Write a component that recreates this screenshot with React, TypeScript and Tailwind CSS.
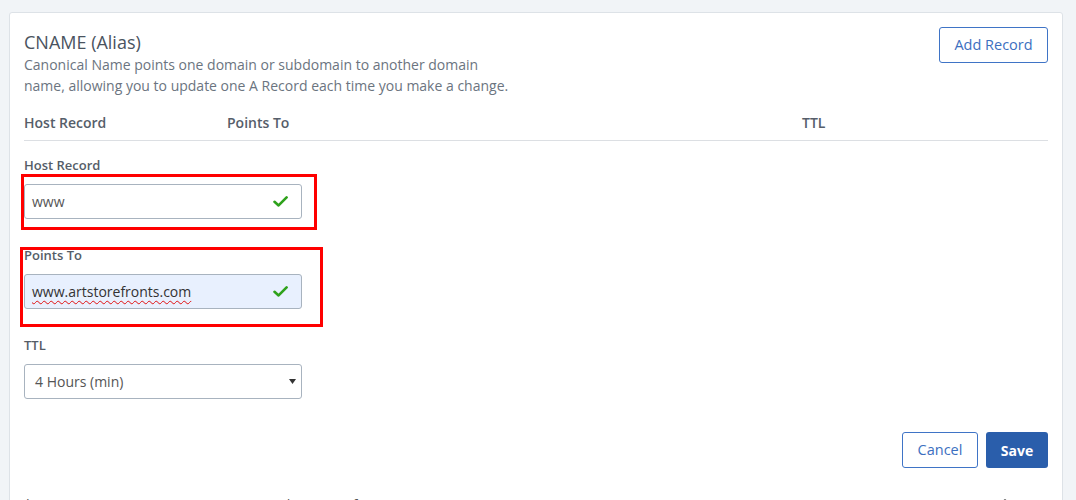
import { EllipsisVertical } from "lucide-react";

function CheckMark() {
  return (
    <svg width="15" height="11" viewBox="0 0 15 11" fill="none" aria-hidden="true">
      <path d="M1.5 5.8 5.6 9.4 13.6 1.4" stroke="#2ea21b" strokeWidth="2.6" strokeLinecap="round" strokeLinejoin="round" />
    </svg>
  );
}

function Caret() {
  return (
    <svg width="7" height="5" viewBox="0 0 7 5" aria-hidden="true">
      <path d="M0 0h7L3.5 5z" fill="#333" />
    </svg>
  );
}

const COLS = "grid grid-cols-[203px_575px_1fr]";

export default function App() {
  return (
    <div className="min-h-screen bg-[#f1f4f7] pl-[9px] pr-[13px] pt-[12px] font-['Open_Sans',sans-serif]">
      <div className="rounded-t-[3px] border border-[#dde2e7] bg-white px-[14px] pt-[14px] pb-6">
        {/* heading + add button */}
        <div className="flex items-start justify-between">
          <div className="mt-[3px]">
            <h2 className="text-[18px] leading-[24px] text-[#4a5360]">CNAME (Alias)</h2>
            <p className="w-[490px] text-[14px] leading-[21px] text-[#6b7480]">
              Canonical Name points one domain or subdomain to another domain name, allowing you to update one A
              Record each time you make a change.
            </p>
          </div>
          <button
            type="button"
            className="h-[36px] w-[109px] rounded-[3px] border border-[#3f74c6] bg-white text-[14.5px] text-[#3c6fc0]"
          >
            Add Record
          </button>
        </div>

        {/* column headings */}
        <div className={`${COLS} mt-[17px] border-b border-[#dcdfe3] pb-[7px] text-[14px] font-semibold leading-[20px] text-[#565e6a]`}>
          <span>Host Record</span>
          <span>Points To</span>
          <span>TTL</span>
        </div>

        {/* edit form */}
        <div className="relative pt-[15px]">
          <label className="block text-[13px] font-semibold leading-[18px] text-[#555d68]">Host Record</label>
          <div className="mt-[10px] flex h-[35px] w-[278px] items-center justify-between rounded-[3px] border border-[#a8b3bf] bg-white pl-[7px] pr-[13px] text-[14px] text-[#555]">
            <span>www</span>
            <CheckMark />
          </div>

          <label className="mt-[27px] block text-[13px] font-semibold leading-[18px] text-[#555d68]">Points To</label>
          <div className="mt-[10px] flex h-[35px] w-[278px] items-center justify-between rounded-[3px] border border-[#a8b3bf] bg-[#e8f0fe] pl-[7px] pr-[13px] text-[14px] text-[#333]">
            <span className="underline decoration-[#e01010] decoration-wavy decoration-1 underline-offset-[3px]">
              www.artstorefronts.com
            </span>
            <CheckMark />
          </div>

          <label className="mt-[27px] block text-[13px] font-semibold leading-[18px] text-[#555d68]">TTL</label>
          <div className="mt-[10px] flex h-[35px] w-[278px] items-center justify-between rounded-[3px] border border-[#a8b3bf] bg-white pl-[10px] pr-[5px] text-[14px] text-[#555]">
            <span>4 Hours (min)</span>
            <Caret />
          </div>

          <div className="mt-[33px] flex justify-end gap-[8px]">
            <button
              type="button"
              className="h-[36px] w-[76px] rounded-[3px] border border-[#3f74c6] bg-white text-[14.5px] text-[#3c6fc0]"
            >
              Cancel
            </button>
            <button type="button" className="h-[36px] w-[62px] rounded-[3px] bg-[#2a5eab] text-[14px] font-bold text-white">
              Save
            </button>
          </div>

          {/* highlight boxes */}
          <div className="absolute left-[-3px] top-[33px] h-[56px] w-[296px] border-[3px] border-[#f00]" />
          <div className="absolute left-[-4px] top-[106px] h-[80px] w-[303px] border-[3px] border-[#f00]" />
        </div>

        {/* existing record row */}
        <div className={`${COLS} mt-[27px] items-start text-[14px] leading-[20px] text-[#555]`}>
          <span>*</span>
          <span>mxrecords.artstorefronts.com</span>
          <div className="flex items-start justify-between">
            <span>4 Hours</span>
            <EllipsisVertical size={18} className="mr-[34px] mt-[2px] text-[#222]" />
          </div>
        </div>
      </div>
    </div>
  );
}
